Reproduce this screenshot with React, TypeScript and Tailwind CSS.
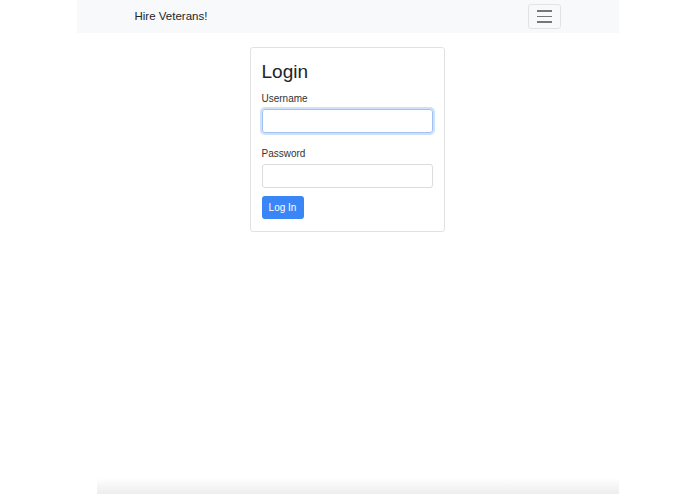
export default function App() {
  return (
    <div
      className="relative flex h-[494px] w-full flex-col bg-white text-[#212529]"
      style={{ fontFamily: '"Liberation Sans", Arial, sans-serif' }}
    >
      <div className="mx-auto flex w-[542px] flex-1 flex-col">
        <nav className="flex h-[33px] items-center justify-between bg-[#f8f9fa] pl-[58px] pr-[58px]">
          <span className="text-[11.5px] text-[#212529]">Hire Veterans!</span>
          <button className="flex h-[25px] w-[33px] flex-col items-center justify-center gap-[4px] rounded-[3px] border border-[#e3e3e3]">
            <span className="h-[1.5px] w-[15px] bg-[#777]"></span>
            <span className="h-[1.5px] w-[15px] bg-[#777]"></span>
            <span className="h-[1.5px] w-[15px] bg-[#777]"></span>
          </button>
        </nav>

        <div className="mt-[14px] ml-[173px] w-[195px] rounded-[3px] border border-[#e2e2e2] px-[11px] pt-[12px] pb-[12px]">
          <h1 className="text-[19px] leading-[24px] text-[#212529]">Login</h1>
          <label className="mt-[8px] block text-[10px] leading-[13px] text-[#333]">Username</label>
          <input
            className="mt-[4px] block h-[24px] w-[171px] rounded-[3px] border border-[#9ec2f5] shadow-[0_0_0_2px_#cfe0fb] outline-none"
            type="text"
          />
          <label className="mt-[14px] block text-[10px] leading-[13px] text-[#333]">Password</label>
          <input
            className="mt-[4px] block h-[24px] w-[171px] rounded-[3px] border border-[#dcdcdc] outline-none"
            type="password"
          />
          <button className="mt-[8px] block h-[23px] w-[42px] rounded-[3px] bg-[#3b86f6] text-[10px] text-white">
            Log In
          </button>
        </div>
        <div className="flex-1"></div>
        <div className="ml-[20px] h-[16px] bg-gradient-to-b from-white to-[#ededed]"></div>
      </div>
    </div>
  );
}
